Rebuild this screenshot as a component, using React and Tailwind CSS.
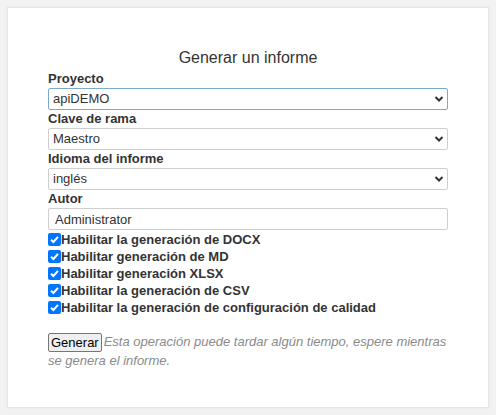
import React, { useState } from "react";

const Chevron = () => (
  <svg
    className="absolute right-[4px] top-[7px] pointer-events-none"
    width="10"
    height="8"
    viewBox="0 0 10 8"
  >
    <path d="M1.5 2 L5 5.5 L8.5 2" fill="none" stroke="#333" strokeWidth="2" />
  </svg>
);

function SelectField({ label, value, options, focused }) {
  const [val, setVal] = useState(value);
  return (
    <div className="flex flex-col">
      <label className="font-bold text-[13px] leading-[18px] text-[#333]">{label}</label>
      <div className="relative h-[22px]">
        <select
          value={val}
          onChange={(e) => setVal(e.target.value)}
          className={
            focused
              ? "block appearance-none w-full h-[22px] border border-[#7fa9c9] rounded-[2px] bg-white pl-[4px] text-[13px] text-[#333] outline-none"
              : "block appearance-none w-full h-[22px] border border-[#cfcfcf] rounded-[2px] bg-white pl-[4px] text-[13px] text-[#333] outline-none"
          }
        >
          {options.map((o) => (
            <option key={o}>{o}</option>
          ))}
        </select>
        <Chevron />
      </div>
    </div>
  );
}

const Check = ({ label }) => (
  <label className="flex items-center h-[17px] text-[13px] font-bold text-[#333]">
    <span className="w-[13px] h-[13px] rounded-[2px] bg-[#0075ff] flex items-center justify-center">
      <svg width="11" height="11" viewBox="0 0 11 11">
        <path d="M2 5.8 L4.4 8 L9 2.8" fill="none" stroke="white" strokeWidth="2" />
      </svg>
    </span>
    <span className="leading-[17px]">{label}</span>
  </label>
);

export default function App() {
  const [author, setAuthor] = useState("Administrator");

  return (
    <div
      className="w-[496px] h-[415px] bg-[#f2f2f2] pt-[7px] pl-[7px]"
      style={{ fontFamily: '"Liberation Sans", Arial, sans-serif' }}
    >
      <div className="w-[482px] h-[401px] bg-white border border-[#e6e6e6] shadow-[0_0_2px_rgba(0,0,0,0.06)] pt-[40px] px-[40px]">
        <h1 className="text-center text-[16px] leading-[20px] text-[#333] mb-[2px]">
          Generar un informe
        </h1>

        <SelectField label="Proyecto" value="apiDEMO" options={["apiDEMO"]} focused />
        <SelectField label="Clave de rama" value="Maestro" options={["Maestro"]} />
        <SelectField label="Idioma del informe" value="inglés" options={["inglés", "español"]} />

        <div className="flex flex-col">
          <label className="font-bold text-[13px] leading-[18px] text-[#333]">Autor</label>
          <input
            value={author}
            onChange={(e) => setAuthor(e.target.value)}
            className="block w-full h-[22px] border border-[#cfcfcf] rounded-[2px] bg-white px-[6px] text-[13px] text-[#333] outline-none"
          />
        </div>

        <div className="flex flex-col mt-[1px]">
          <Check label="Habilitar la generación de DOCX" />
          <Check label="Habilitar generación de MD" />
          <Check label="Habilitar generación XLSX" />
          <Check label="Habilitar la generación de CSV" />
          <Check label="Habilitar la generación de configuración de calidad" />
        </div>

        <p className="mt-[17px] text-[13px] leading-[17px]">
          <button className="h-[19px] px-[2px] border border-[#767676] rounded-[2px] bg-[#efefef] text-[13px] leading-[16px] text-black align-top mr-[2px]">
            Generar
          </button>
          <span className="italic text-[#8a8a8a]">
            Esta operación puede tardar algún tiempo, espere mientras se genera el informe.
          </span>
        </p>
      </div>
    </div>
  );
}
